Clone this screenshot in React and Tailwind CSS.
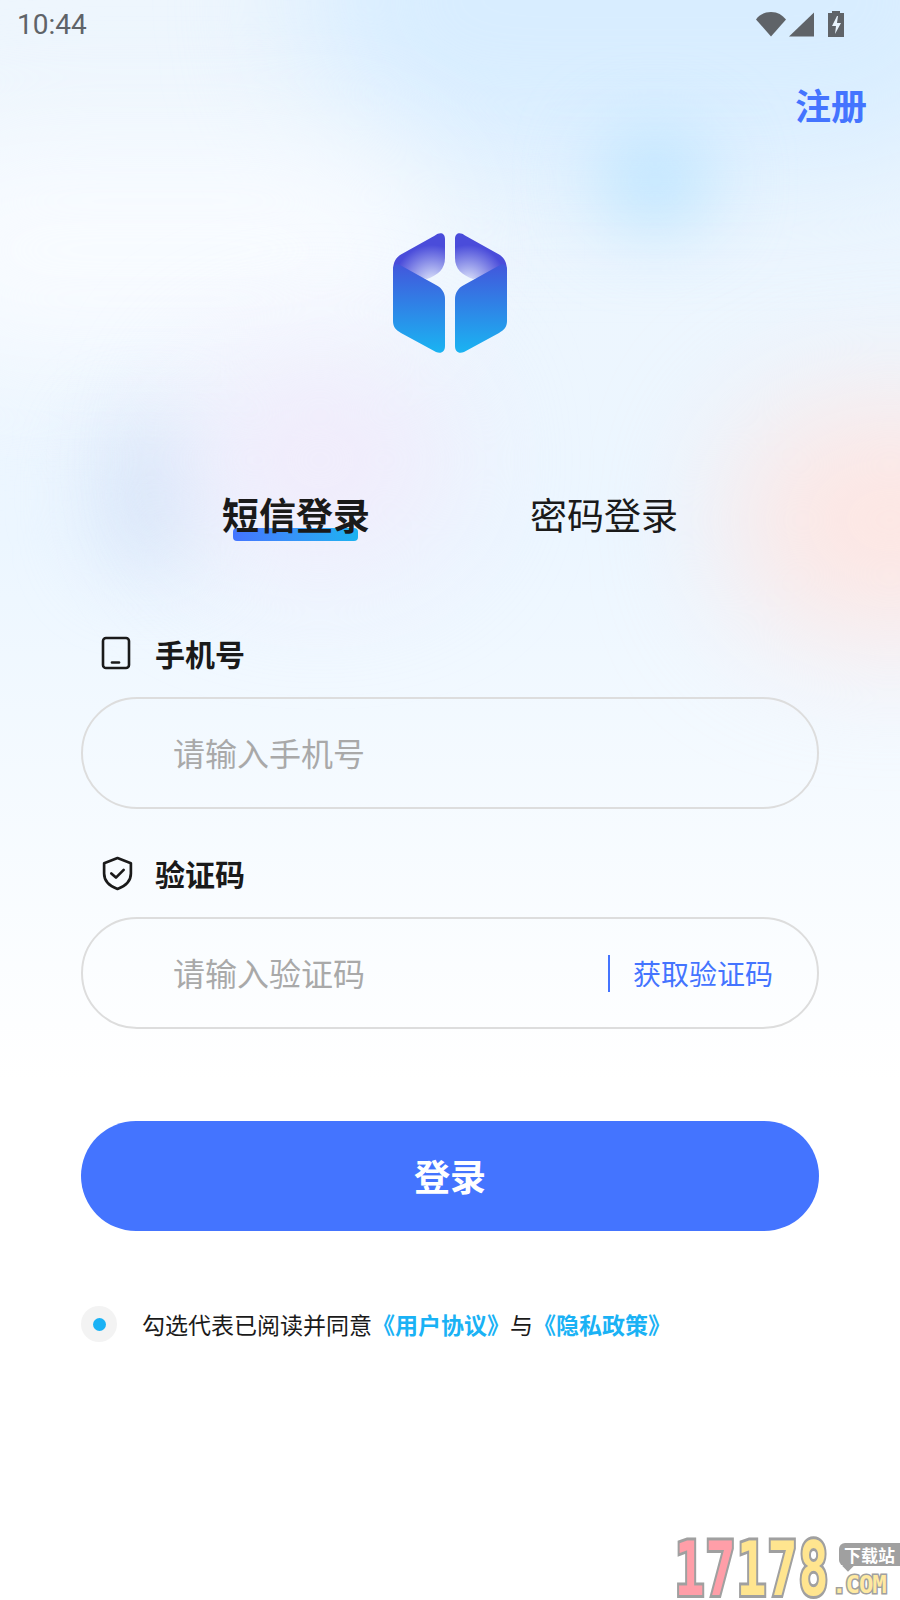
import React from 'react';

const CJK = "font-['Noto_Sans_CJK_SC','Noto_Sans',sans-serif]";

const StatusIcons = () => (
  <svg className="mb-[3px]" width="92" height="28" viewBox="0 0 92 28" fill="#5f6368">
    <path d="M2 9.500C5 5 10 2 17 2S28 5 32 9.500L17 26.500Z" />
    <path d="M35 26.500 60 2.500V26.500Z" />
    <path d="M74 3h4V1h8v2h4v24H74Z" />
    <path d="M83 6 78 16h4l-1 8 6-11h-4l1-7Z" fill="#e8f3fc" />
  </svg>
);

const Logo = () => (
  <svg width="160" height="160" viewBox="0 0 160 160">
    <defs>
      <linearGradient id="body" x1="0" y1="0" x2="0" y2="1">
        <stop offset="0" stopColor="#4257dc" />
        <stop offset="1" stopColor="#1ab4f2" />
      </linearGradient>
      <radialGradient id="capL" gradientUnits="userSpaceOnUse" cx="62" cy="72" r="38">
        <stop offset="0" stopColor="#e4eafb" />
        <stop offset="0.4" stopColor="#a5abee" />
        <stop offset="1" stopColor="#4a4cda" />
      </radialGradient>
      <radialGradient id="capR" gradientUnits="userSpaceOnUse" cx="98" cy="72" r="38">
        <stop offset="0" stopColor="#e4eafb" />
        <stop offset="0.4" stopColor="#a5abee" />
        <stop offset="1" stopColor="#4a4cda" />
      </radialGradient>
    </defs>
    <path fill="url(#capL)" d="M23 60C23 51 26 47 30 44L65 24.500C70 20.500 75 22 75 28V47C75 58 68 64 57 68Z" />
    <path fill="url(#capR)" d="M137 60C137 51 134 47 130 44L95 24.500C90 20.500 85 22 85 28V47C85 58 92 64 103 68Z" />
    <path fill="url(#body)" d="M23 60C23 54 26 52 30 54L66 74C72 77 75 82 75 88V135C75 141 71 143 66 141L31 122C26 119 23 116 23 110Z" />
    <path fill="url(#body)" d="M137 60C137 54 134 52 130 54L94 74C88 77 85 82 85 88V135C85 141 89 143 94 141L129 122C134 119 137 116 137 110Z" />
  </svg>
);

const PhoneIcon = () => (
  <svg width="30" height="34" viewBox="0 0 30 34" fill="none" stroke="#1a1a1a" strokeWidth="2.600" strokeLinecap="round">
    <rect x="2" y="2" width="26" height="30" rx="3" />
    <path d="M11 26.500h7" />
  </svg>
);

const ShieldIcon = () => (
  <svg width="33" height="35" viewBox="0 0 32 34" fill="none" stroke="#1a1a1a" strokeWidth="2.600" strokeLinecap="round" strokeLinejoin="round">
    <path d="M16 2 29 7V17C29 25 23 29.500 16 32 9 29.500 3 25 3 17V7Z" />
    <path d="M10 17 14.500 21 22 13.500" />
  </svg>
);

const Field = ({ icon, label, placeholder, children }) => (
  <div>
    <div className="flex items-center h-[36px]">
      <div className="w-[74px] pl-[20px] flex items-center">{icon}</div>
      <span className="text-[30px] font-bold text-[#1a1a1a] leading-none">{label}</span>
    </div>
    <div className="mt-[26px] h-[112px] rounded-full border-2 border-[#dddddd] flex items-center pl-[90px] pr-[44px]">
      <span className="flex-1 text-[32px] text-[#a9a9a9] leading-none pb-[2px]">{placeholder}</span>
      {children}
    </div>
  </div>
);

const Watermark = () => (
  <div className="absolute right-0 bottom-0 w-[226px] h-[62px] font-['DejaVu_Sans_Mono',monospace] font-bold">
    <div className="absolute left-0 top-[12px] flex text-[50px] leading-[38px] [-webkit-text-stroke:4px_#a0a0a0] [paint-order:stroke_fill]">
      <span className="w-[31px] scale-y-[1.5] text-center text-[#ff9ea8]">1</span>
      <span className="w-[31px] scale-y-[1.5] text-center text-[#ff9ea8]">7</span>
      <span className="w-[31px] scale-y-[1.5] text-center text-[#ffe58f]">1</span>
      <span className="w-[31px] scale-y-[1.5] text-center text-[#ffe58f]">7</span>
      <span className="w-[31px] scale-y-[1.5] text-center text-[#ffe58f]">8</span>
    </div>
    <div className="absolute left-[170px] top-[24px] w-[8px] h-[8px] bg-[#a0a0a0] rotate-45" />
    <div className={`absolute left-[165px] top-[5px] w-[61px] h-[23px] rounded-l-[6px] bg-[#a0a0a0] text-white text-[17px] font-bold leading-[23px] text-center ${CJK}`}>下载站</div>
    <div className="absolute left-[158px] top-[34px] text-[24px] leading-[26px] text-[#ffe9a0] [-webkit-text-stroke:3px_#a0a0a0] [paint-order:stroke_fill] tracking-[-1px]">.COM</div>
  </div>
);

export default function App() {
  return (
    <div className={`relative w-full h-[1600px] overflow-hidden bg-white ${CJK}`}>
      {/* backdrop */}
      <div className="absolute inset-x-0 top-0 h-[1080px] bg-gradient-to-b from-[#eef6fd] via-[#ecf6ff] to-white" />
      <div className="absolute right-[-120px] top-[-170px] w-[720px] h-[340px] rounded-full bg-[#d8edff] blur-3xl" />
      <div className="absolute left-[-120px] top-[140px] w-[560px] h-[220px] rounded-full bg-[#f8fbff] blur-3xl" />
      <div className="absolute left-[600px] top-[135px] w-[110px] h-[90px] rounded-full bg-[#b8e3ff] blur-2xl" />
      <div className="absolute left-[100px] top-[420px] w-[100px] h-[150px] rounded-full bg-[#d6e5f9] blur-2xl" />
      <div className="absolute left-[190px] top-[360px] w-[260px] h-[200px] rounded-full bg-[#f1ebfb] blur-3xl" />
      <div className="absolute right-[-150px] top-[400px] w-[320px] h-[240px] rounded-full bg-[#fde6e3] blur-3xl" />

      <div className="relative">
        {/* status bar */}
        <div className="h-[50px] flex items-center justify-between pl-[17px] pr-[54px]">
          <span className="font-['Roboto',sans-serif] text-[28px] text-[#5f6368] leading-none">10:44</span>
          <StatusIcons />
        </div>

        <div className="flex justify-end pr-[33px] pt-[30px]">
          <span className="text-[36px] font-bold text-[#4474ff] leading-[48px]">注册</span>
        </div>

        <div className="flex justify-center mt-[83px]">
          <Logo />
        </div>

        {/* tabs */}
        <div className="flex justify-center gap-[160px] mt-[119px]">
          <div className="relative">
            <div className="absolute left-[11px] right-[12px] bottom-[-3px] h-[13px] rounded-[4px] bg-gradient-to-r from-[#4474ff] to-[#1ab2f0]" />
            <span className="relative block text-[37px] font-bold text-[#1a1a1a] leading-[48px]">短信登录</span>
          </div>
          <span className="text-[37px] text-[#1a1a1a] leading-[48px]">密码登录</span>
        </div>

        {/* form */}
        <div className="mx-[81px] mt-[97px]">
          <Field icon={<PhoneIcon />} label="手机号" placeholder="请输入手机号" />
          <div className="mt-[46px]">
            <Field icon={<ShieldIcon />} label="验证码" placeholder="请输入验证码">
              <div className="w-[2px] h-[37px] bg-[#4474ff] mr-[23px]" />
              <span className="text-[28px] text-[#4474ff] leading-none">获取验证码</span>
            </Field>
          </div>

          <button className="mt-[92px] w-full h-[110px] rounded-full bg-[#4474ff] text-white text-[36px] font-bold pb-[3px]">
            登录
          </button>

          <div className="flex items-center mt-[75px]">
            <div className="w-[36px] h-[36px] rounded-full bg-[#f3f3f3] flex items-center justify-center">
              <div className="w-[13px] h-[13px] rounded-full bg-[#1ab2f5]" />
            </div>
            <p className="ml-[25px] text-[23px] text-[#1a1a1a] leading-[32px] whitespace-nowrap">
              勾选代表已阅读并同意
              <span className="font-bold text-[#1ab2f5]">《用户协议》</span>
              与
              <span className="font-bold text-[#1ab2f5]">《隐私政策》</span>
            </p>
          </div>
        </div>
      </div>

      <Watermark />
    </div>
  );
}
